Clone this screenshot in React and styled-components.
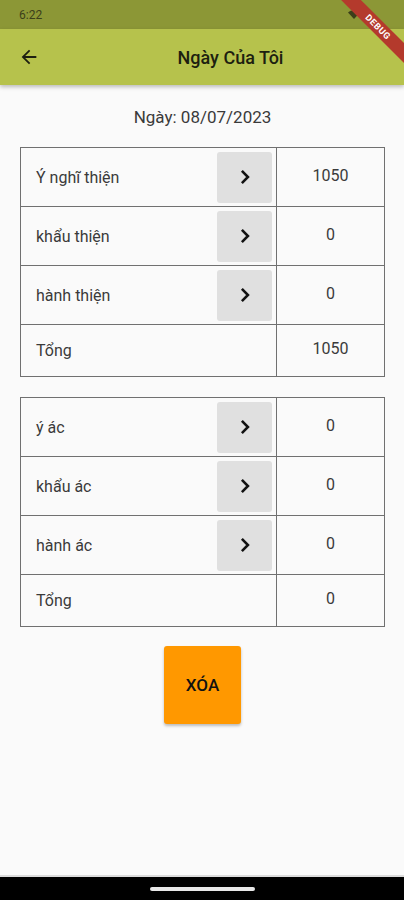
import styled, { createGlobalStyle } from "styled-components";

const GlobalStyle = createGlobalStyle`
    html, body {
        margin: 0;
        padding: 0;
        background: #fafafa;
    }
    body {
        font-family: Roboto, "Noto Sans", sans-serif;
    }
`

const Screen = styled.div`
    position: relative;
    width: 404px;
    height: 900px;
    display: flex;
    flex-direction: column;
    background: #fafafa;
    overflow: hidden;
`

const StatusBar = styled.div`
    height: 29px;
    flex-shrink: 0;
    background: #8c9736;
    display: flex;
    align-items: center;
    justify-content: space-between;
    padding: 0 44px 0 19px;
    font-size: 12px;
    color: #3b3f1a;
`

const AppBar = styled.header`
    height: 56px;
    flex-shrink: 0;
    background: #b6c24c;
    display: flex;
    align-items: center;
    box-shadow: 0 2px 4px rgba(0, 0, 0, 0.25);
    position: relative;
    z-index: 1;
`

const BackButton = styled.div`
    width: 56px;
    display: flex;
    justify-content: center;
    padding-left: 1px;
`

const Title = styled.h1`
    flex: 1;
    margin: 0 16px 0 16px;
    text-align: center;
    font-size: 18px;
    font-weight: 500;
    color: #1d1f10;
`

const Content = styled.main`
    flex: 1;
    display: flex;
    flex-direction: column;
    align-items: center;
    padding: 0 19px 0 20px;
`

const DateLabel = styled.div`
    margin-top: 21px;
    margin-bottom: 19px;
    height: 22px;
    font-size: 17px;
    color: #3a3a3a;
    line-height: 22px;
`

const Table = styled.div`
    width: 100%;
    display: grid;
    grid-template-columns: 255px 1fr;
    border: 1px solid #707070;
    box-sizing: border-box;
    margin-bottom: ${(p) => p.$gap || 0}px;
`

const LabelCell = styled.div`
    display: flex;
    align-items: center;
    justify-content: space-between;
    height: ${(p) => (p.$total ? 51 : 58)}px;
    padding: 0 4px 0 15px;
    border-top: ${(p) => (p.$first ? "none" : "1px solid #707070")};
    font-size: 16px;
    color: #3a3a3a;
`

const ValueCell = styled.div`
    display: flex;
    align-items: center;
    justify-content: center;
    border-left: 1px solid #707070;
    border-top: ${(p) => (p.$first ? "none" : "1px solid #707070")};
    font-size: 16px;
    color: #3a3a3a;
    padding-bottom: 4px;
`

const ArrowButton = styled.div`
    width: 55px;
    height: 51px;
    border-radius: 3px;
    background: #e0e0e0;
    display: flex;
    align-items: center;
    justify-content: center;
`

const DeleteButton = styled.button`
    width: 77px;
    height: 78px;
    border: none;
    border-radius: 3px;
    background: #ff9800;
    font-family: Roboto, sans-serif;
    font-size: 17px;
    font-weight: 500;
    color: #111;
    box-shadow: 0 2px 3px rgba(0, 0, 0, 0.25);
`

const NavBar = styled.div`
    height: 23px;
    flex-shrink: 0;
    background: #000;
    border-top: 2px solid #dcdcdc;
    display: flex;
    justify-content: center;
    align-items: center;
`

const NavPill = styled.div`
    width: 105px;
    height: 4px;
    border-radius: 2px;
    background: #e8e8e8;
`

const DebugBanner = styled.div`
    position: absolute;
    top: 20px;
    right: -26px;
    width: 104px;
    height: 14px;
    background: #b43a2c;
    transform: rotate(45deg);
    color: #fff;
    font-size: 9px;
    font-weight: 700;
    text-align: center;
    line-height: 14px;
    letter-spacing: 0.5px;
    z-index: 2;
`

const Chevron = () => (
    <svg width="22" height="22" viewBox="0 0 24 24">
        <path d="M8.6 5.4 15.2 12l-6.6 6.6" fill="none" stroke="#111" strokeWidth="2.8" />
    </svg>
)

const BackArrow = () => (
    <svg width="22" height="22" viewBox="0 0 24 24">
        <path d="M20 11H7.83l5.59-5.59L12 4l-8 8 8 8 1.41-1.41L7.83 13H20v-2z" fill="#1d1f10" />
    </svg>
)

const Wifi = () => (
    <svg width="12" height="10" viewBox="0 0 24 20">
        <path d="M12 18 0 5C7-1 17-1 24 5z" fill="#3b3f1a" />
    </svg>
)

const GOOD = [
    { label: "Ý nghĩ thiện", value: 1050 },
    { label: "khẩu thiện", value: 0 },
    { label: "hành thiện", value: 0 },
]

const BAD = [
    { label: "ý ác", value: 0 },
    { label: "khẩu ác", value: 0 },
    { label: "hành ác", value: 0 },
]

const DeedTable = ({ rows, gap }) => {
    const total = rows.reduce((s, r) => s + r.value, 0)
    return (
        <Table $gap={gap}>
            {rows.map((r, i) => [
                <LabelCell key={r.label} $first={i === 0}>
                    <span>{r.label}</span>
                    <ArrowButton><Chevron /></ArrowButton>
                </LabelCell>,
                <ValueCell key={r.label + "v"} $first={i === 0}>{r.value}</ValueCell>,
            ])}
            <LabelCell $total>Tổng</LabelCell>
            <ValueCell $total>{total}</ValueCell>
        </Table>
    )
}

export default function App() {
    return (
        <Screen>
            <GlobalStyle />
            <StatusBar>
                <span>6:22</span>
                <Wifi />
            </StatusBar>
            <DebugBanner>DEBUG</DebugBanner>
            <AppBar>
                <BackButton><BackArrow /></BackButton>
                <Title>Ngày Của Tôi</Title>
            </AppBar>
            <Content>
                <DateLabel>Ngày: 08/07/2023</DateLabel>
                <DeedTable rows={GOOD} gap={20} />
                <DeedTable rows={BAD} gap={19} />
                <DeleteButton>XÓA</DeleteButton>
            </Content>
            <NavBar><NavPill /></NavBar>
        </Screen>
    )
}
